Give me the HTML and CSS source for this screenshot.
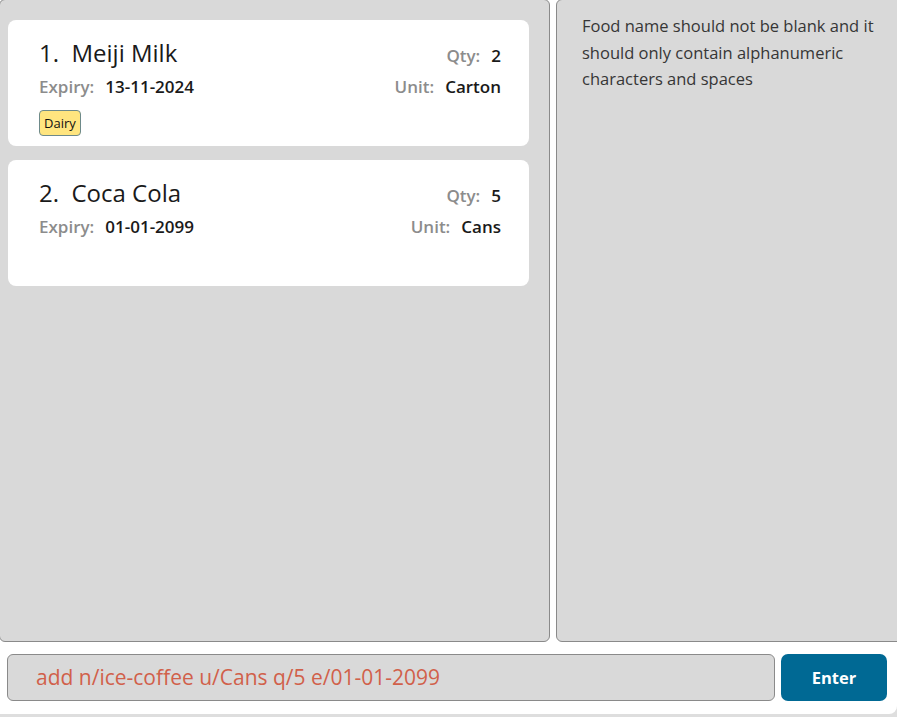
FILE: index.html
```html
<!DOCTYPE html>
<html>
<head>
<meta charset="utf-8">
<link rel="stylesheet" href="styles.css">
</head>
<body>
<div class="app">
  <div class="panels">
    <div class="list-panel">
      <div class="card">
        <div class="row">
          <div class="title">1.&nbsp; Meiji Milk</div>
          <div class="field"><span class="label">Qty:</span><span class="value">2</span></div>
        </div>
        <div class="row">
          <div class="field"><span class="label">Expiry:</span><span class="value">13-11-2024</span></div>
          <div class="field"><span class="label">Unit:</span><span class="value">Carton</span></div>
        </div>
        <div class="tags"><span class="tag">Dairy</span></div>
      </div>
      <div class="card">
        <div class="row">
          <div class="title">2.&nbsp; Coca Cola</div>
          <div class="field"><span class="label">Qty:</span><span class="value">5</span></div>
        </div>
        <div class="row">
          <div class="field"><span class="label">Expiry:</span><span class="value">01-01-2099</span></div>
          <div class="field"><span class="label">Unit:</span><span class="value">Cans</span></div>
        </div>
      </div>
    </div>
    <div class="result-panel">
      <p class="result">Food name should not be blank and it should only contain alphanumeric characters and spaces</p>
    </div>
  </div>
  <div class="command-bar">
    <div class="command-input">add n/ice-coffee u/Cans q/5 e/01-01-2099</div>
    <button class="enter">Enter</button>
  </div>
</div>
</body>
</html>
```

FILE: styles.css
```css
html, body {
  margin: 0;
  padding: 0;
}
body {
  background: #dedede;
  font-family: "Open Sans", "Noto Sans", sans-serif;
  width: 897px;
  height: 717px;
  overflow: hidden;
}
.app {
  display: flex;
  flex-direction: column;
  height: 714px;
  background: #ffffff;
  border-bottom-right-radius: 8px;
  overflow: hidden;
}
.panels {
  display: flex;
  gap: 6px;
  height: 643px;
  margin-top: -1px;
  flex: none;
}
.list-panel {
  box-sizing: border-box;
  width: 551px;
  margin-left: -1px;
  background: #d9d9d9;
  border: 1px solid #8a8a8a;
  border-radius: 6px;
  padding: 20px 20px 0 8px;
  display: flex;
  flex-direction: column;
  gap: 14px;
}
.result-panel {
  box-sizing: border-box;
  flex: 1;
  margin-right: -6px;
  background: #d9d9d9;
  border: 1px solid #8a8a8a;
  border-radius: 6px;
  padding: 13px 10px 0 25px;
}
.result {
  margin: 0;
  font-size: 16.5px;
  line-height: 26.5px;
  color: #363636;
}
.card {
  background: #ffffff;
  border-radius: 8px;
  height: 126px;
  box-sizing: border-box;
  padding: 16px 28px 0 31px;
}
.row {
  display: flex;
  justify-content: space-between;
  align-items: baseline;
}
.title {
  font-size: 24px;
  color: #1a1a1a;
  line-height: 34px;
}
.field {
  font-size: 17px;
  font-weight: 600;
  line-height: 31px;
}
.label {
  color: #8c8c8c;
  margin-right: 11px;
}
.value {
  color: #1a1a1a;
}
.tags {
  margin-top: 8px;
  display: flex;
}
.tag {
  display: inline-block;
  background: #ffe57f;
  border: 1px solid #6e8a8a;
  border-radius: 4px;
  font-size: 13px;
  line-height: 24px;
  height: 24px;
  padding: 0 4px;
  color: #111;
}
.command-bar {
  display: flex;
  gap: 6px;
  padding: 12px 8px 0 7px;
}
.command-input {
  box-sizing: border-box;
  width: 768px;
  height: 47px;
  background: #d9d9d9;
  border: 1px solid #8a8a8a;
  border-radius: 6px;
  padding-left: 28px;
  font-size: 21px;
  line-height: 45px;
  color: #d1604a;
  white-space: nowrap;
  flex: none;
}
.enter {
  flex: none;
  width: 106px;
  height: 47px;
  background: #006994;
  border: none;
  border-radius: 7px;
  color: #ffffff;
  font-family: "Open Sans", "Noto Sans", sans-serif;
  font-weight: 700;
  font-size: 16.5px;
  padding: 0;
}
```
